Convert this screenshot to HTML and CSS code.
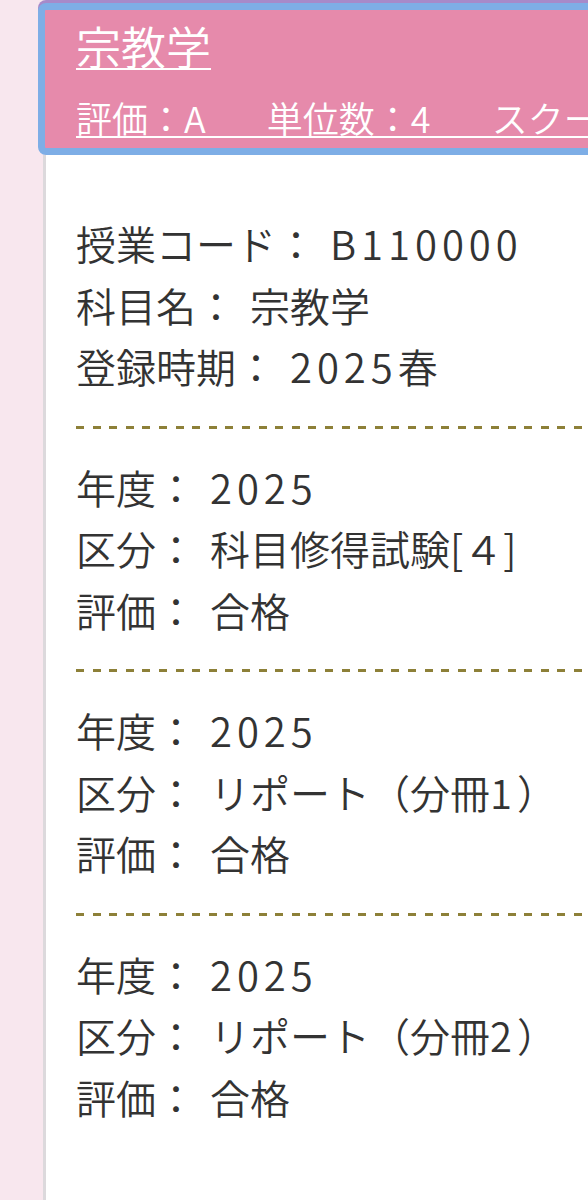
FILE: index.html
```html
<!DOCTYPE html>
<html lang="ja">
<head>
<meta charset="utf-8">
<link rel="stylesheet" href="styles.css">
</head>
<body>
<div class="card">
  <div class="head">
    <div class="title"><a>宗教学</a></div>
    <div class="meta"><a>評価：A　&ensp;&thinsp;単位数：4　&ensp;&thinsp;スクーリング：済</a></div>
  </div>
  <div class="panel">
    <div class="sec">
      <div class="row">授業コード： <span class="v num">B110000</span></div>
      <div class="row">科目名： <span class="v">宗教学</span></div>
      <div class="row">登録時期： <span class="v"><span class="num">2025</span>春</span></div>
    </div>
    <div class="sec">
      <div class="row">年度： <span class="v num">2025</span></div>
      <div class="row">区分： <span class="v">科目修得試験[４]</span></div>
      <div class="row">評価： <span class="v">合格</span></div>
    </div>
    <div class="sec">
      <div class="row">年度： <span class="v num">2025</span></div>
      <div class="row">区分： <span class="v">リポート（分冊<span class="num">1</span>）</span></div>
      <div class="row">評価： <span class="v">合格</span></div>
    </div>
    <div class="sec last">
      <div class="row">年度： <span class="v num">2025</span></div>
      <div class="row">区分： <span class="v">リポート（分冊<span class="num">2</span>）</span></div>
      <div class="row">評価： <span class="v">合格</span></div>
    </div>
  </div>
</div>
</body>
</html>
```

FILE: styles.css
```css
html, body {
  margin: 0;
  padding: 0;
}
body {
  background: #f8e7ee;
  font-family: "Noto Sans CJK JP", "Noto Sans", sans-serif;
  overflow: hidden;
  height: 1200px;
}
.card {
  margin-left: 38px;
  width: 700px;
  padding-top: 3px;
}
.head {
  background: #e68aab;
  border: 7px solid #7eaee6;
  border-radius: 8px;
  box-shadow: 0 -3px 0 0 #a78ac9;
  padding: 9px 0 9px 31px;
  color: #fff;
}
.head a {
  color: #fff;
  text-decoration: underline;
  text-decoration-thickness: 2px;
  text-underline-offset: 3px;
  font-weight: 350;
}
.title {
  font-size: 45px;
  line-height: 54px;
}
.meta {
  margin-top: 22px;
  font-size: 36px;
  line-height: 44px;
  white-space: pre;
}
.panel {
  margin-left: 5px;
  border-left: 3px solid #dcd9dc;
  background: #fff;
  padding: 30px 0 200px 30px;
  color: #333;
}
.sec {
  padding: 28px 0 31px;
  font-size: 40px;
  line-height: 61.5px;
  font-weight: 350;
  background-image: repeating-linear-gradient(to right, #8d8038 0 8px, transparent 8px 16.6px);
  background-size: 100% 3px;
  background-repeat: no-repeat;
  background-position: 0 100%;
}
.sec.last {
  background-image: none;
}
.row {
  white-space: nowrap;
}
.v {
  margin-left: 5px;
}
.num {
  letter-spacing: 5px;
}
```
